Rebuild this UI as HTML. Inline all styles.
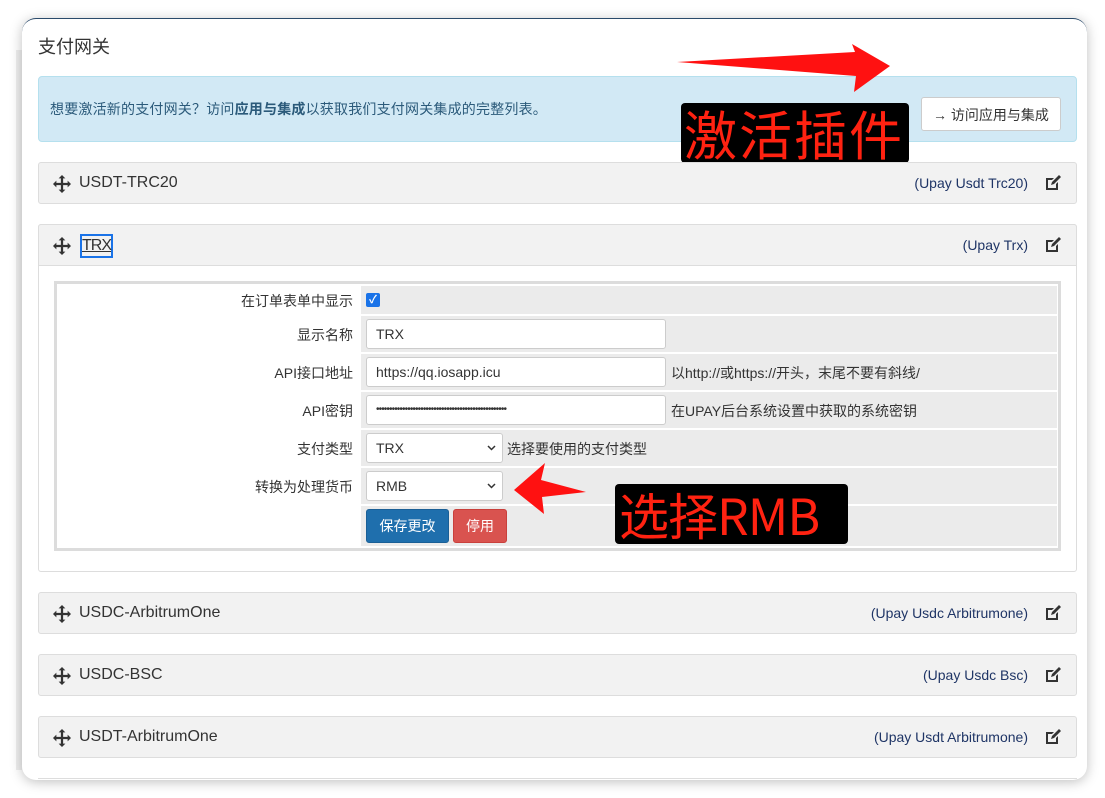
<!DOCTYPE html>
<html><head><meta charset="utf-8"><style>
*{box-sizing:border-box;margin:0;padding:0}
body{width:1105px;height:798px;background:#fff;position:relative;overflow:hidden;font-family:"Liberation Sans","Noto Sans CJK SC",sans-serif;color:#333}
.card{position:absolute;left:22px;top:18px;width:1065px;height:762px;background:#fff;border-radius:14px;box-shadow:0 2px 12px rgba(0,0,0,.25);overflow:hidden;border-top:1px solid #2a4a6b}
.abs{position:absolute}
.panel{position:absolute;left:38px;width:1039px;height:42px;background:#f2f2f2;border:1px solid #ddd;border-radius:3px}
.panel .nm{position:absolute;left:40px;top:11px;font-size:16px;color:#333}
.panel .mv{position:absolute;left:14px;top:12px}
.panel .mod{position:absolute;right:48px;top:12px;font-size:14px;color:#1f3566}
.panel .ed{position:absolute;right:15px;top:12px}
.row{position:absolute;left:58px;width:999px;height:36px}
.row .lb{position:absolute;right:704px;top:9px;font-size:14px;color:#333;white-space:nowrap}
.row .vc{position:absolute;left:303px;top:0;width:696px;height:36px;background:#ebebeb}
.inp{position:absolute;left:5px;top:3px;height:30px;border:1px solid #ccc;border-radius:3px;background:#fff;font-size:14px;padding:6px 9px;color:#333}
.hint{position:absolute;top:9px;font-size:14px;color:#333;white-space:nowrap}
.lab{position:absolute;background:#000;border-radius:4px;color:#ff2211;font-family:"Noto Sans CJK SC","Liberation Sans",sans-serif;white-space:nowrap}
</style></head><body>
<div class="abs" style="left:16px;top:50px;width:6px;height:720px;background:#eee"></div>
<div class="card"></div>
<div class="abs" style="left:38px;top:33px;font-size:18px;color:#333">支付网关</div>
<div class="abs" style="left:38px;top:76px;width:1039px;height:66px;background:#d2e9f5;border:1px solid #b5e0ee;border-radius:4px"></div>
<div class="abs" style="left:50px;top:99px;font-size:14px;color:#2b5a7a;letter-spacing:0.2px">想要激活新的支付网关？访问<b>应用与集成</b>以获取我们支付网关集成的完整列表。</div>
<div class="abs" style="left:921px;top:97px;width:140px;height:34px;background:#fff;border:1px solid #ccc;border-radius:3px;font-size:14px;padding-top:7px;text-align:center;color:#333"><b>→</b> 访问应用与集成</div>
<svg class="abs" style="left:670px;top:40px" width="230" height="60"><polygon points="7,22 185,12 182,4 220,26 184,52 186,36" fill="#ff1111"/></svg>
<div class="lab" style="left:681px;top:103px;width:228px;height:60px;font-size:53px;line-height:60px;padding-left:3px;letter-spacing:2px">激活插件</div>

<div class="panel" style="top:162px"><svg class="mv" width="18" height="18" viewBox="0 0 16 16"><path d="M8 0L11 3H9V7H13V5L16 8L13 11V9H9V13H11L8 16L5 13H7V9H3V11L0 8L3 5V7H7V3H5Z" fill="#333"/></svg><span class="nm">USDT-TRC20</span><span class="mod">(Upay Usdt Trc20)</span><svg class="ed" width="16" height="16" viewBox="0 0 16 16"><path d="M1 3h8l-2 2H3v8h8V9l2-2v8H1z M9 9l-3 1 1-3 7-7 2 2z" fill="#333"/></svg></div>

<div class="abs" style="left:38px;top:224px;width:1039px;height:348px;border:1px solid #ddd;border-radius:3px;background:#fff"></div>
<div class="panel" style="top:224px;border-radius:3px 3px 0 0"><svg class="mv" width="18" height="18" viewBox="0 0 16 16"><path d="M8 0L11 3H9V7H13V5L16 8L13 11V9H9V13H11L8 16L5 13H7V9H3V11L0 8L3 5V7H7V3H5Z" fill="#333"/></svg><span class="nm" style="left:41px;top:9px;border:2px solid #1a73e8;padding:0;text-decoration:underline;line-height:20px;letter-spacing:-1px">TRX</span><span class="mod">(Upay Trx)</span><svg class="ed" width="16" height="16" viewBox="0 0 16 16"><path d="M1 3h8l-2 2H3v8h8V9l2-2v8H1z M9 9l-3 1 1-3 7-7 2 2z" fill="#333"/></svg></div>

<div class="abs" style="left:54px;top:281px;width:1007px;height:270px;border:3px solid #dcdcdc;background:#fff"></div>
<div class="row" style="top:286px;height:28px"><span class="lb" style="top:5px">在订单表单中显示</span><div class="vc" style="height:28px"><div class="abs" style="left:5px;top:7px;width:14px;height:14px;background:#1a73e8;border-radius:2px;color:#fff;font-size:11px;line-height:14px;text-align:center;font-weight:bold">✓</div></div></div>
<div class="row" style="top:316px"><span class="lb">显示名称</span><div class="vc"><div class="inp" style="width:300px">TRX</div></div></div>
<div class="row" style="top:354px"><span class="lb">API接口地址</span><div class="vc"><div class="inp" style="width:300px">https://qq.iosapp.icu</div><span class="hint" style="left:310px">以http://或https://开头，末尾不要有斜线/</span></div></div>
<div class="row" style="top:392px"><span class="lb">API密钥</span><div class="vc"><div class="inp" style="width:300px;font-size:10px;padding-top:8px;letter-spacing:-0.9px;white-space:nowrap;overflow:hidden">••••••••••••••••••••••••••••••••••••••••••••••••••</div><span class="hint" style="left:310px">在UPAY后台系统设置中获取的系统密钥</span></div></div>
<div class="row" style="top:430px"><span class="lb">支付类型</span><div class="vc"><div class="inp" style="width:137px">TRX<svg style="position:absolute;right:6px;top:11px" width="9" height="6"><path d="M1 1l3.5 3.5L8 1" stroke="#333" stroke-width="1.5" fill="none"/></svg></div><span class="hint" style="left:146px">选择要使用的支付类型</span></div></div>
<div class="row" style="top:468px"><span class="lb">转换为处理货币</span><div class="vc"><div class="inp" style="width:137px">RMB<svg style="position:absolute;right:6px;top:11px" width="9" height="6"><path d="M1 1l3.5 3.5L8 1" stroke="#333" stroke-width="1.5" fill="none"/></svg></div></div></div>
<div class="row" style="top:506px;height:40px"><div class="vc" style="height:40px"><div class="abs" style="left:5px;top:3px;width:83px;height:34px;background:#1f6fad;border:1px solid #1a5f96;border-radius:3px;color:#fff;font-size:14px;text-align:center;line-height:32px">保存更改</div><div class="abs" style="left:92px;top:3px;width:54px;height:34px;background:#d9534f;border:1px solid #c9403c;border-radius:3px;color:#fff;font-size:14px;text-align:center;line-height:32px">停用</div></div></div>

<svg class="abs" style="left:510px;top:460px" width="80" height="60"><polygon points="4,30 35,3 31,20 76,32 32,37 34,54" fill="#ff1111"/></svg>
<div class="lab" style="left:615px;top:484px;width:233px;height:60px;font-size:50px;line-height:60px;padding-left:4px;letter-spacing:-1px">选择RMB</div>

<div class="panel" style="top:592px"><svg class="mv" width="18" height="18" viewBox="0 0 16 16"><path d="M8 0L11 3H9V7H13V5L16 8L13 11V9H9V13H11L8 16L5 13H7V9H3V11L0 8L3 5V7H7V3H5Z" fill="#333"/></svg><span class="nm">USDC-ArbitrumOne</span><span class="mod">(Upay Usdc Arbitrumone)</span><svg class="ed" width="16" height="16" viewBox="0 0 16 16"><path d="M1 3h8l-2 2H3v8h8V9l2-2v8H1z M9 9l-3 1 1-3 7-7 2 2z" fill="#333"/></svg></div>
<div class="panel" style="top:654px"><svg class="mv" width="18" height="18" viewBox="0 0 16 16"><path d="M8 0L11 3H9V7H13V5L16 8L13 11V9H9V13H11L8 16L5 13H7V9H3V11L0 8L3 5V7H7V3H5Z" fill="#333"/></svg><span class="nm">USDC-BSC</span><span class="mod">(Upay Usdc Bsc)</span><svg class="ed" width="16" height="16" viewBox="0 0 16 16"><path d="M1 3h8l-2 2H3v8h8V9l2-2v8H1z M9 9l-3 1 1-3 7-7 2 2z" fill="#333"/></svg></div>
<div class="panel" style="top:716px"><svg class="mv" width="18" height="18" viewBox="0 0 16 16"><path d="M8 0L11 3H9V7H13V5L16 8L13 11V9H9V13H11L8 16L5 13H7V9H3V11L0 8L3 5V7H7V3H5Z" fill="#333"/></svg><span class="nm">USDT-ArbitrumOne</span><span class="mod">(Upay Usdt Arbitrumone)</span><svg class="ed" width="16" height="16" viewBox="0 0 16 16"><path d="M1 3h8l-2 2H3v8h8V9l2-2v8H1z M9 9l-3 1 1-3 7-7 2 2z" fill="#333"/></svg></div>
<div class="abs" style="left:38px;top:778px;width:1039px;height:1px;background:#ddd"></div>
</body></html>
